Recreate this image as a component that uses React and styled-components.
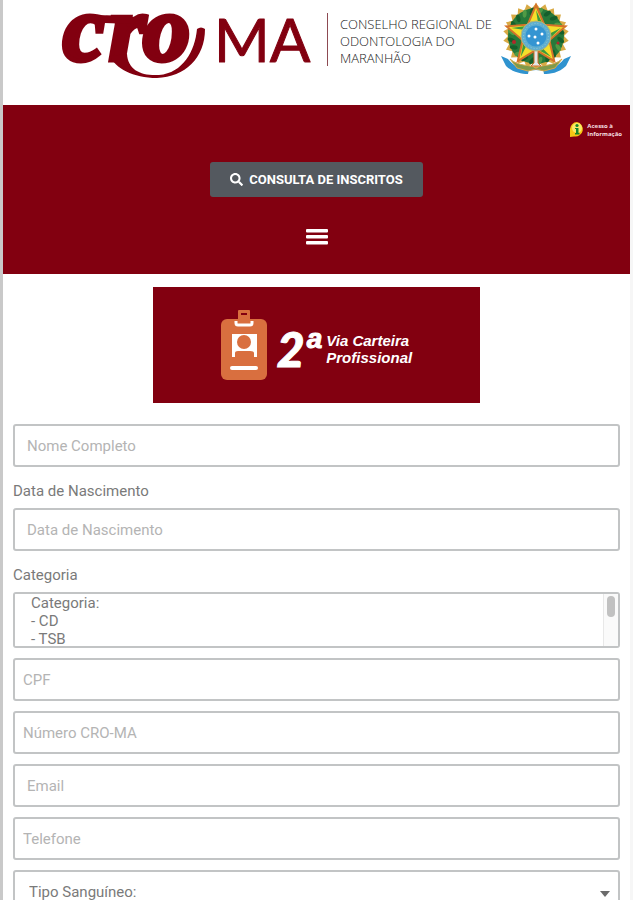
import React from "react";
import styled, { createGlobalStyle } from "styled-components";
import { FaSearch } from "react-icons/fa";

const WINE = "#820010";

const GlobalStyle = createGlobalStyle`
	* {
		box-sizing: border-box;
	}

	html {
		scrollbar-width: none;
	}

	body {
		margin: 0;
		background: #fff;
		font-family: Roboto, "Liberation Sans", sans-serif;
	}
`;

const Page = styled.div`
	min-height: 100vh;
	border-left: 3px solid #c9c9c9;
	border-right: 3px solid #f6f6f6;
`;

const Header = styled.header`
	display: flex;
	justify-content: center;
	align-items: flex-start;
	height: 105px;
`;

const Logo = styled.svg`
	flex: none;
	overflow: visible;
`;

const Council = styled.p`
	margin: 13px 8px 0 14px;
	padding: 3px 0 0 12px;
	height: 53px;
	border-left: 1px solid #8d4a52;
	color: #222;
	font-family: "Open Sans", "Noto Sans", sans-serif;
	font-size: 13px;
	font-weight: 300;
	line-height: 17px;
	white-space: nowrap;
`;

const Emblem = styled.svg`
	margin-top: 2px;
	flex: none;
`;

const Nav = styled.nav`
	display: flex;
	flex-direction: column;
	align-items: center;
	padding: 16px 8px 29px;
	background: ${WINE};
`;

const AccessLink = styled.a`
	display: flex;
	align-items: center;
	align-self: flex-end;
	gap: 2px;
	margin-bottom: 24px;
	height: 17px;
	color: #f5dfe1;
	font-family: "Open Sans", sans-serif;
	font-size: 6px;
	font-weight: 700;
	line-height: 8px;
	text-decoration: none;
`;

const SearchButton = styled.button`
	display: flex;
	align-items: center;
	justify-content: center;
	gap: 6px;
	height: 35px;
	padding: 0 20px;
	border: 0;
	border-radius: 3px;
	background: #54595f;
	color: #fff;
	font-family: inherit;
	font-size: 13px;
	font-weight: 700;
	cursor: pointer;
`;

const MenuButton = styled.button`
	display: flex;
	margin-top: 31px;
	padding: 0;
	border: 0;
	background: none;
	cursor: pointer;
`;

const Banner = styled.h1`
	display: flex;
	align-items: center;
	justify-content: center;
	gap: 10px;
	width: 327px;
	height: 116px;
	margin: 13px auto 21px;
	background: ${WINE};
	color: #fff;
	font-family: "Liberation Sans", sans-serif;
	font-style: italic;
`;

const BannerTitle = styled.span`
	display: flex;
	align-items: center;
	gap: 4px;
	padding-top: 8px;
`;

const Numeral = styled.span`
	display: flex;
	align-items: flex-start;
	gap: 2px;
	font-family: Lato, sans-serif;
	font-size: 48px;
	font-weight: 900;
	line-height: 48px;
	-webkit-text-stroke: 1px #fff;
`;

const Ordinal = styled.span`
	font-family: "Liberation Sans", sans-serif;
	font-size: 28px;
	line-height: 28px;
`;

const BannerText = styled.span`
	font-size: 15px;
	font-weight: 700;
	line-height: 17px;
`;

const Form = styled.form`
	display: flex;
	flex-direction: column;
	gap: 10px;
	padding: 0 10px 16px;
`;

const Field = styled.div`
	position: relative;
	display: flex;
	flex-direction: column;
`;

const Label = styled.label`
	margin-bottom: 3px;
	color: #7a7a7a;
	font-size: 15px;
	line-height: 28px;
`;

const Input = styled.input`
	width: 100%;
	height: 43px;
	padding: 0 ${(props) => (props.$tight ? 8 : 12)}px;
	border: 2px solid #c2c4c5;
	border-radius: 3px;
	background: #fff;
	color: #7a7a7a;
	font-family: inherit;
	font-size: 15px;

	&::placeholder {
		color: #b4b4b4;
		opacity: 1;
	}
`;

const ListBox = styled.select`
	width: 100%;
	height: 56px;
	padding: 0;
	border: 2px solid #c2c4c5;
	border-radius: 3px;
	background: #fff;
	color: #7a7a7a;
	font-family: inherit;
	font-size: 15px;
	scrollbar-width: none;

	option {
		min-height: 18px;
		padding: 0 16px;
		line-height: 18px;
	}
`;

const ScrollTrack = styled.div`
	position: absolute;
	right: 2px;
	bottom: 2px;
	width: 15px;
	height: 52px;
	padding: 2px 3px;
	border-left: 1px solid #e8e8e8;
	background: #fafafa;
	pointer-events: none;
`;

const ScrollThumb = styled.div`
	width: 8px;
	height: 21px;
	border-radius: 4px;
	background: #c1c1c1;
`;

const DropDown = styled.select`
	width: 100%;
	height: 43px;
	padding: 0 14px;
	border: 2px solid #c2c4c5;
	border-radius: 3px;
	appearance: none;
	background: #fff;
	color: #7a7a7a;
	font-family: inherit;
	font-size: 15px;
`;

const Caret = styled.svg`
	position: absolute;
	right: 10px;
	top: 20px;
	pointer-events: none;
`;

const CroLogo = () => (
	<Logo width="252" height="80" viewBox="0 0 252 80" role="img" aria-label="CRO MA">
		<g fill={WINE}>
			<text
				x="2 48 82"
				y="60"
				fontFamily="'Liberation Serif', serif"
				fontSize="94"
				fontWeight="700"
				fontStyle="italic"
				stroke={WINE}
				strokeWidth="5"
			>
				cro
			</text>
			<path d="M30 16 Q48 14 74 17 L70 24 L44 23 Z" />
			<path d="M49 56 C54 68 72 78 96 78 C124 77 144 58 144 29 Q140 26 136 29 C134 51 122 73 98 75 C80 76 67 70 66 54 Z" />
			<text
				x="153"
				y="62"
				fontFamily="Lato, sans-serif"
				fontSize="60"
				stroke={WINE}
				strokeWidth="1"
				strokeLinejoin="round"
			>
				MA
			</text>
		</g>
	</Logo>
);

const polar = (radius, deg) => {
	const a = ((deg - 90) * Math.PI) / 180;
	return [36 + radius * Math.cos(a), 34 + radius * Math.sin(a)];
};

const starPoints = (outer, inner, count) =>
	Array.from({ length: count * 2 }, (_, i) =>
		polar(i % 2 ? inner : outer, (i * 180) / count).join(",")
	).join(" ");

const BrazilArms = () => (
	<Emblem width="72" height="74" viewBox="0 0 72 74" role="img" aria-label="Brasão da República">
		<polygon points={starPoints(33, 28, 22)} fill="#d9aa45" />
		<circle cx="36" cy="34" r="28" fill="#27793a" />
		{Array.from({ length: 20 }, (_, i) => {
			const [x, y] = polar(25, i * 18 + 9);
			return (
				<ellipse
					key={i}
					cx={x}
					cy={y}
					rx="2"
					ry="4"
					fill={i % 3 ? "#155f2c" : "#4f9a45"}
					transform={`rotate(${i * 18 + 40} ${x} ${y})`}
				/>
			);
		})}
		<circle cx="14" cy="40" r="2" fill="#b3262b" />
		<circle cx="58" cy="41" r="1.5" fill="#b3262b" />
		<path
			d="M1 54 L8 57 C15 66 25 69 36 68 C47 69 57 66 64 57 L71 54 L66 64 C59 71 50 72 44 72 L43 67 L29 67 L28 72 C21 72 12 70 6 64 Z"
			fill="#2f93cf"
		/>
		<path
			d="M10 57 C19 65 29 62 36 66 C43 62 53 65 62 57 L55 66 L44 69 L36 67 L28 69 L17 66 Z"
			fill="#7f9a4b"
			stroke="#d3a94a"
		/>
		<polygon points={starPoints(31, 14, 5)} fill="#f5df2b" stroke="#d5722a" strokeWidth="2" />
		{[0, 72, 144, 216, 288].map((deg) => (
			<polygon
				key={deg}
				points={`${polar(26, deg)} ${polar(14, deg + 28)} ${polar(14, deg + 8)}`}
				fill="#3c9a3e"
			/>
		))}
		<path d="M34 48 L38 48 L38 61 L41 64 L31 64 L34 61 Z" fill="#e3e7e8" stroke="#cf6a2a" />
		<circle cx="36" cy="34" r="15" fill="#5faed0" stroke="#b7b670" />
		<circle cx="36" cy="34" r="12.5" fill="none" stroke="#92cbdc" strokeDasharray="1 2" />
		<circle cx="36" cy="34" r="10.5" fill="#3495d2" />
		{[[36, 27], [29, 34], [42, 32], [35, 35], [38, 41]].map(([x, y]) => (
			<circle key={`${x}-${y}`} cx={x} cy={y} r="1.5" fill="#fff" />
		))}
	</Emblem>
);

const InfoIcon = () => (
	<svg width="16" height="17" viewBox="0 0 16 17" aria-hidden="true">
		<path d="M8 1 A7.3 7.3 0 1 1 5 15.4 L1 16 L1 8 A7.3 7.3 0 0 1 8 1 Z" fill="#f6c713" />
		<circle cx="8" cy="7" r="5" fill="#fbe968" />
		<circle cx="8" cy="4.5" r="1.6" fill="#17852c" />
		<path d="M6 7 H9.5 V12 H10.5 V13.5 H6 V12 H7 V8 H6 Z" fill="#17852c" />
	</svg>
);

const BadgeIcon = () => (
	<svg width="46" height="70" viewBox="0 0 46 70" aria-hidden="true">
		<rect y="9" width="46" height="61" rx="6" fill="#d96f3f" />
		<path d="M15 11 V13 Q15 15 17 15 H29 Q31 15 31 13 V11" fill="none" stroke="#fff" strokeWidth="3" />
		<rect x="17" y="0" width="12" height="13" rx="1" fill="#d96f3f" />
		<rect x="20" y="3" width="6" height="2" fill={WINE} />
		<rect x="11" y="24" width="25" height="23" fill="#fff" />
		<circle cx="23" cy="32" r="7" fill="#d96f3f" />
		<path d="M14 47 V43 Q14 41 17 41 H29 Q33 41 33 43 V47 Z" fill="#d96f3f" />
		<rect x="9" y="56" width="28" height="4" rx="2" fill="#fff" />
	</svg>
);

const App = () => {
	return (
		<React.Fragment>
			<GlobalStyle />
			<Page>
				<Header>
					<CroLogo />
					<Council>
						CONSELHO REGIONAL DE
						<br />
						ODONTOLOGIA DO
						<br />
						MARANHÃO
					</Council>
					<BrazilArms />
				</Header>

				<Nav>
					<AccessLink href="#acesso">
						<InfoIcon />
						<span>
							Acesso à
							<br />
							Informação
						</span>
					</AccessLink>
					<SearchButton type="button">
						<FaSearch size={13} />
						CONSULTA DE INSCRITOS
					</SearchButton>
					<MenuButton type="button" aria-label="Menu">
						<svg width="22" height="17" viewBox="0 0 22 17" fill="#fff">
							<rect y="1" width="22" height="3.5" rx="1" />
							<rect y="7" width="22" height="3.5" rx="1" />
							<rect y="13" width="22" height="3.5" rx="1" />
						</svg>
					</MenuButton>
				</Nav>

				<Banner>
					<BadgeIcon />
					<BannerTitle>
						<Numeral>
							2<Ordinal>a</Ordinal>
						</Numeral>
						<BannerText>
							Via Carteira
							<br />
							Profissional
						</BannerText>
					</BannerTitle>
				</Banner>

				<Form>
					<Input type="text" aria-label="Nome Completo" placeholder="Nome Completo" />
					<Field>
						<Label htmlFor="nascimento">Data de Nascimento</Label>
						<Input id="nascimento" type="text" placeholder="Data de Nascimento" />
					</Field>
					<Field>
						<Label htmlFor="categoria">Categoria</Label>
						<ListBox id="categoria" multiple size={3}>
							<option>Categoria:</option>
							<option>- CD</option>
							<option>- TSB</option>
							<option>- ASB</option>
							<option>- TPD</option>
							<option>- APD</option>
						</ListBox>
						<ScrollTrack aria-hidden="true">
							<ScrollThumb />
						</ScrollTrack>
					</Field>
					<Input $tight type="text" aria-label="CPF" placeholder="CPF" />
					<Input $tight type="text" aria-label="Número CRO-MA" placeholder="Número CRO-MA" />
					<Input type="email" aria-label="Email" placeholder="Email" />
					<Input $tight type="tel" aria-label="Telefone" placeholder="Telefone" />
					<Field>
						<DropDown aria-label="Tipo Sanguíneo">
							<option>Tipo Sanguíneo:</option>
						</DropDown>
						<Caret width="10" height="7" viewBox="0 0 10 7" fill="#6b6b6b">
							<path d="M0 1 H10 L5 7 Z" />
						</Caret>
					</Field>
				</Form>
			</Page>
		</React.Fragment>
	);
};

export default App;
